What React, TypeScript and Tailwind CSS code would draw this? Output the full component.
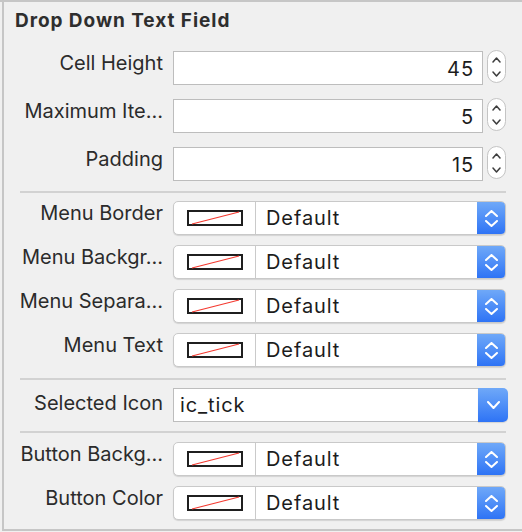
import { ReactNode } from "react";

const font = "font-['Inter','Liberation_Sans',sans-serif]";

function Label({ children, className = "" }: { children: ReactNode; className?: string }) {
  return (
    <div
      className={`w-[159px] shrink-0 whitespace-nowrap text-right text-[20px] leading-[24px] text-[#2b2b2b] ${className}`}
    >
      {children}
    </div>
  );
}

function Chevron({ up, color, w = 9, h = 6, stroke = 1.5 }: { up?: boolean; color: string; w?: number; h?: number; stroke?: number }) {
  const d = up
    ? `M1 ${h - 1} L${w / 2} 1 L${w - 1} ${h - 1}`
    : `M1 1 L${w / 2} ${h - 1} L${w - 1} 1`;
  return (
    <svg width={w} height={h} viewBox={`0 0 ${w} ${h}`}>
      <path d={d} stroke={color} strokeWidth={stroke} fill="none" strokeLinecap="round" strokeLinejoin="round" />
    </svg>
  );
}

function NumberRow({ label, value }: { label: string; value: string }) {
  return (
    <div className="flex h-[34px] gap-[10px]">
      <Label>{label}</Label>
      <div className="flex h-[34px] w-[310px] items-center justify-end border border-[#bdbdbd] bg-white pr-[8px] pt-[1px] text-[20px] leading-[24px] tracking-[0.9px] text-[#1c1c1c]">
        {value}
      </div>
      <div className="-ml-[6px] -mt-[1px] flex h-[33px] w-[19px] flex-col items-center justify-center gap-[8px] rounded-full border border-[#c4c4c4] bg-white">
        <Chevron up color="#3d3d3d" w={9} h={6} />
        <Chevron color="#3d3d3d" w={9} h={6} />
      </div>
    </div>
  );
}

function Swatch() {
  return (
    <svg width="56" height="16" viewBox="0 0 56 16">
      <rect x="1" y="1" width="54" height="14" fill="white" stroke="#1f1f1f" strokeWidth="2" />
      <line x1="5" y1="14" x2="52" y2="2" stroke="#f43a30" strokeWidth="1.2" />
    </svg>
  );
}

function ColorRow({ label }: { label: string }) {
  return (
    <div className="flex h-[34px] gap-[10px]">
      <Label>{label}</Label>
      <div className="flex h-[34px] w-[333px] overflow-hidden rounded-[5px] border border-[#c9c9c9] bg-white shadow-[0_1px_1px_rgba(0,0,0,0.12)]">
        <div className="flex w-[82px] items-center justify-center border-r border-[#cacaca]">
          <Swatch />
        </div>
        <div className="flex flex-1 items-center pl-[10px] text-[20px] leading-[24px] tracking-[0.9px] text-[#1c1c1c]">
          Default
        </div>
        <div className="flex w-[28px] flex-col items-center justify-center gap-[3px] bg-linear-to-b from-[#6fa8f8] to-[#2e73f5]">
          <Chevron up color="#ffffff" w={13} h={7} stroke={2} />
          <Chevron color="#ffffff" w={13} h={7} stroke={2} />
        </div>
      </div>
    </div>
  );
}

function Separator({ className = "" }: { className?: string }) {
  return <div className={`ml-[16px] h-[2px] w-[486px] bg-[#d2d2d2] ${className}`} />;
}

export default function App() {
  return (
    <div className={`h-[532px] w-[522px] border-t-2 border-[#c6c6c6] bg-[#f0f0f0] ${font}`}>
      <div className="ml-[2px] flex h-[529px] flex-col border-b-2 border-l-2 border-[#c6c6c6]">
        <div className="ml-[11px] mt-[8px] text-[19px] font-bold leading-[22px] tracking-[0.95px] text-[#2e2e2e]">
          Drop Down Text Field
        </div>

        <div className="mt-[19px] flex flex-col gap-[14px]">
          <NumberRow label="Cell Height" value="45" />
          <NumberRow label="Maximum Ite…" value="5" />
          <NumberRow label="Padding" value="15" />
        </div>

        <Separator className="mt-[10px]" />

        <div className="mt-[8px] flex flex-col gap-[10px]">
          <ColorRow label="Menu Border" />
          <ColorRow label="Menu Backgr…" />
          <ColorRow label="Menu Separa…" />
          <ColorRow label="Menu Text" />
        </div>

        <Separator className="mt-[11px]" />

        <div className="mt-[8px] flex h-[34px] gap-[10px]">
          <Label className="pt-[3px]">Selected Icon</Label>
          <div className="flex h-[34px] w-[335px]">
            <div className="flex flex-1 items-center border border-r-0 border-[#bdbdbd] bg-white pl-[6px] text-[20px] leading-[24px] tracking-[0.9px] text-[#1c1c1c]">
              ic_tick
            </div>
            <div className="flex w-[30px] items-center justify-center rounded-r-[5px] bg-linear-to-b from-[#6fa8f8] to-[#2e73f5] shadow-[0_1px_1px_rgba(0,0,0,0.12)]">
              <Chevron color="#ffffff" w={13} h={8} stroke={2} />
            </div>
          </div>
        </div>

        <Separator className="mt-[9px]" />

        <div className="mt-[9px] flex flex-col gap-[10px]">
          <ColorRow label="Button Backg…" />
          <ColorRow label="Button Color" />
        </div>
      </div>
    </div>
  );
}
